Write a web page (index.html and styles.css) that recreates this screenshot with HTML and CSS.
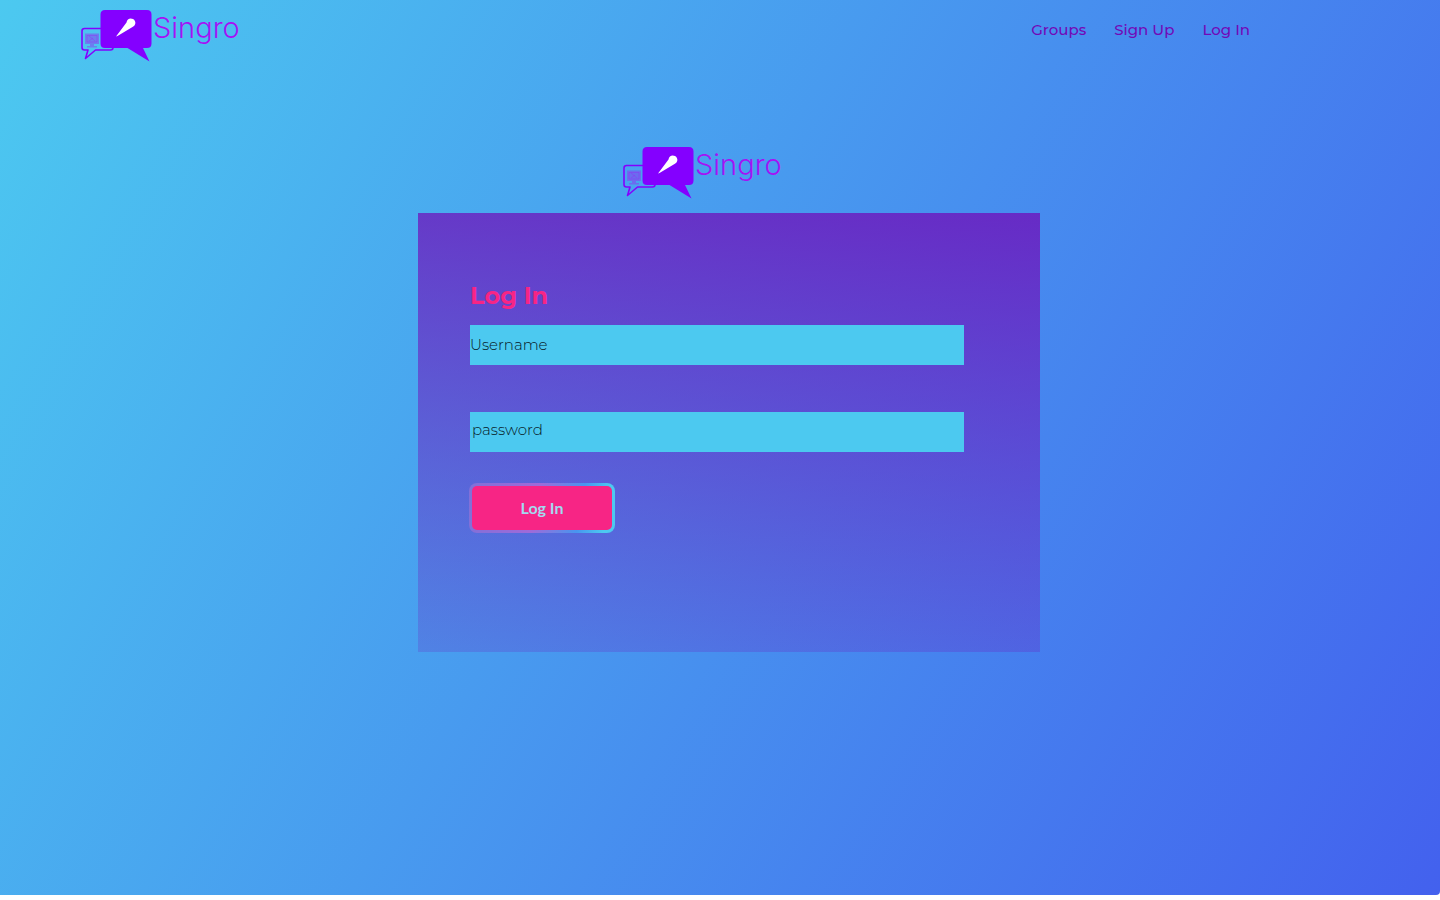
FILE: index.html
```html
<!DOCTYPE html>
<html lang="en">
<head>
<meta charset="utf-8">
<meta name="viewport" content="width=device-width, initial-scale=1">
<title>Singro</title>
<link rel="stylesheet" href="styles.css">
</head>
<body>
<svg class="sprite" aria-hidden="true">
  <symbol id="logo" viewBox="0 0 164 54" overflow="visible">
    <path d="M4.500 20.500H31Q33 20.500 33 23V39.500Q33 42 30.500 42H15.500L5.500 50.500L8 42H4.500Q2 42 2 39.500V23Q2 20.500 4.500 20.500Z" fill="none" stroke="#8400ff" stroke-width="1.600" stroke-linejoin="round"/>
    <path d="M5 25.500H19V36H5ZM10 36H14V38H10ZM7 38H17V39.500H7Z" fill="#8d35ef" opacity=".5"/>
    <path d="M7 27.500H17V34H7ZM9 28L15 33M9 33L13 30" fill="none" stroke="#a512f5" opacity=".3"/>
    <path d="M25 2H67Q71.500 2 71.500 6.500V35.500Q71.500 40 67 40H63L69.500 53.500L47.500 40H25Q20.500 40 20.500 35.500V6.500Q20.500 2 25 2Z" fill="#8400ff"/>
    <path d="M36 28.500L46.500 14.500C47 10.500 50.500 9.800 53 11C56.500 13 56 17.500 52.500 19L37.500 28Z" fill="#fff"/>
    <text class="logo-text" x="73" y="30" fill="#a512f5">Singro</text>
  </symbol>
</svg>
<div class="page">
  <header class="topbar">
    <a href="#" aria-label="Singro home"><svg class="logo" aria-hidden="true"><use href="#logo"/></svg></a>
    <nav class="nav">
      <a href="#">Groups</a>
      <a href="#">Sign Up</a>
      <a href="#">Log In</a>
    </nav>
  </header>
  <main class="main">
    <svg class="logo" role="img" aria-label="Singro"><use href="#logo"/></svg>
    <form class="card">
      <h1 class="title">Log In</h1>
      <input class="field" type="text" placeholder="Username" aria-label="Username">
      <input class="field field-password" type="password" placeholder="password" aria-label="Password">
      <button class="submit" type="button">Log In</button>
    </form>
  </main>
</div>
</body>
</html>
```
FILE: styles.css
```css
* { box-sizing: border-box; }
body { margin: 0; background: #fff; font-family: Montserrat, Inter, sans-serif; }
.sprite { position: absolute; width: 0; height: 0; }
.page {
  min-height: calc(100vh - 5px);
  background: linear-gradient(120deg, #4cc9f0, #4361ee);
  border-bottom-right-radius: 4px;
}
.topbar {
  display: flex;
  justify-content: space-between;
  padding: 8px 190px 0 80px;
}
.logo { display: block; width: 164px; height: 54px; overflow: visible; }
.logo-text { font-family: Inter, sans-serif; font-size: 29px; font-weight: 300; }
.nav { display: flex; gap: 28px; padding-top: 12px; }
.nav a {
  color: #7209b7;
  font-size: 15px;
  line-height: 20px;
  font-weight: 500;
  text-decoration: none;
}
.main {
  display: flex;
  flex-direction: column;
  align-items: center;
  gap: 14px;
  padding-top: 83px;
}
.main .logo { margin-right: 32px; }
.card {
  width: 622px;
  max-width: 100%;
  margin-left: 18px;
  padding: 68px 76px 119px 52px;
  display: flex;
  flex-direction: column;
  align-items: flex-start;
  background: linear-gradient(183deg, rgba(114, 9, 183, .74), rgba(114, 9, 183, .19));
}
.title { margin: 0 0 14px; color: #f72585; font-size: 24px; line-height: 30px; font-weight: 700; }
.field {
  width: 100%;
  height: 40px;
  padding: 0 0 2px;
  border: 0;
  border-radius: 0;
  background: #4cc9f0;
  color: #06161d;
  font: 300 15px/20px Montserrat, Inter, sans-serif;
}
.field::placeholder { color: #06161d; opacity: 1; }
.field-password { margin-top: 47px; padding: 0 2px 6px; }
.submit {
  width: 146px;
  height: 50px;
  margin: 31px 0 0 -1px;
  border: 3px solid transparent;
  border-radius: 8px;
  background: linear-gradient(#f72585, #f72585) padding-box, linear-gradient(100deg, #8270d8 5%, #a06ad8 45%, #4895ef 75%, #4cc9f0 92%) border-box;
  color: #a5d8ef;
  font: 700 16px/20px Lato, sans-serif;
}
```
